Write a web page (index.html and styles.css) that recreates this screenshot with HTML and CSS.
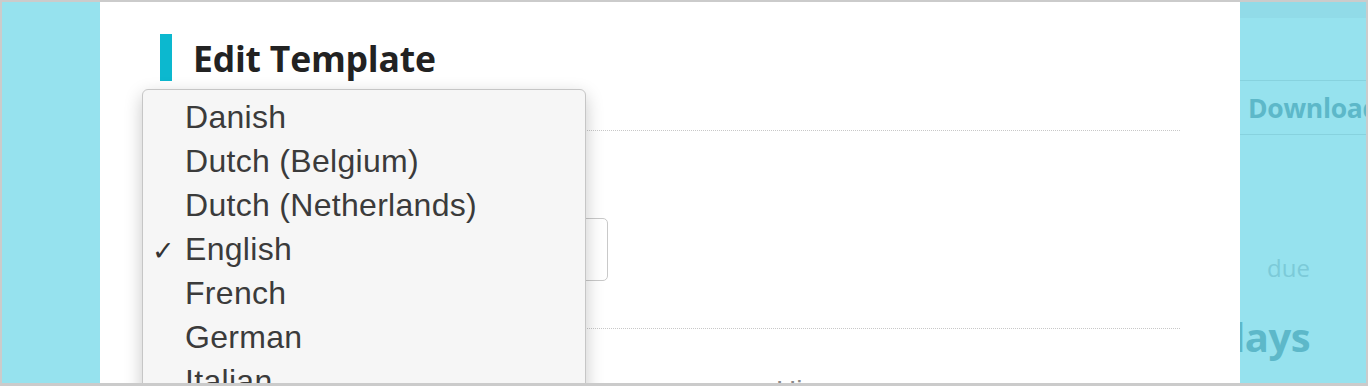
FILE: index.html
```html
<!DOCTYPE html>
<html lang="en">
<head>
    <meta charset="UTF-8">
    <title>Edit Template</title>
    <link rel="stylesheet" href="styles.css">
</head>
<body>
    <div class="frame">
        <div class="gutter"></div>

        <div class="modal">
            <h2 class="modal-title">Edit Template</h2>
            <div class="field">
                <label class="field-label">Language</label>
                <div class="field-input">English</div>
            </div>
            <div class="preview">
                <span class="preview-text">Hi</span>
            </div>

            <ul class="select-menu">
                <li class="select-item">Danish</li>
                <li class="select-item">Dutch (Belgium)</li>
                <li class="select-item">Dutch (Netherlands)</li>
                <li class="select-item checked">English</li>
                <li class="select-item">French</li>
                <li class="select-item">German</li>
                <li class="select-item">Italian</li>
            </ul>
        </div>

        <!-- page behind the overlay -->
        <div class="behind">
            <div class="behind-top"></div>
            <div class="behind-bar">Download</div>
            <div class="behind-due">due</div>
            <div class="behind-days">days</div>
        </div>
    </div>
</body>
</html>
```

FILE: styles.css
```css
body{
    margin: 0;
}
ul, li{
    list-style: none;
    padding: 0;
    margin: 0;
}
.frame{
    width: 1368px;
    height: 386px;
    box-sizing: border-box;
    border: 2px solid #cbcbcb;
    border-bottom-width: 3px;
    background: #96e2ee;
    display: flex;
    overflow: hidden;
    font-family: "Liberation Sans", Arial, sans-serif;
}
.gutter{
    width: 98px;
    flex: none;
}
.modal{
    width: 1140px;
    flex: none;
    background: #fff;
    box-sizing: border-box;
    padding: 32px 60px 0 60px;
    position: relative;
}
.modal-title{
    margin: 0;
    height: 47px;
    border-left: 12px solid #0cb8cf;
    padding-left: 21px;
    font-family: "Open Sans", sans-serif;
    font-weight: 700;
    font-size: 35.5px;
    line-height: 49px;
    color: #222;
    letter-spacing: -0.2px;
}
.field{
    margin-top: 49px;
    border-top: 1px dotted #c8c8c8;
    border-bottom: 1px dotted #c8c8c8;
    height: 199px;
    box-sizing: border-box;
    padding-top: 38px;
}
.field-label{
    display: block;
    font-size: 18px;
    color: #666;
    height: 49px;
}
.field-input{
    width: 448px;
    height: 63px;
    box-sizing: border-box;
    border: 1px solid #c9c9c9;
    border-radius: 5px;
    padding: 0 16px;
    line-height: 61px;
    font-size: 20px;
    color: #333;
}
.preview{
    padding: 46px 0 0 616px;
}
.preview-text{
    font-size: 28px;
    color: #8a8a8a;
}
.select-menu{
    position: absolute;
    left: 42px;
    top: 87px;
    width: 444px;
    height: 330px;
    box-sizing: border-box;
    padding-top: 5px;
    background: #f6f6f6;
    border: 1px solid #c6c6c6;
    border-radius: 6px;
    box-shadow: 0 6px 18px rgba(0, 0, 0, 0.22);
}
.select-item{
    height: 44px;
    line-height: 44px;
    padding-left: 42px;
    font-size: 32px;
    letter-spacing: 0.3px;
    color: #3b3b3b;
    position: relative;
}
.select-item.checked:before{
    content: "\2713";
    position: absolute;
    left: 9px;
    top: 2px;
    font-family: "DejaVu Sans", sans-serif;
    font-weight: 700;
    font-size: 27px;
    color: #333;
}
.behind{
    flex: 1;
    overflow: hidden;
    font-family: "Open Sans", sans-serif;
    font-weight: 700;
    color: #5db8c9;
}
.behind-top{
    height: 16px;
    background: #91dbe8;
    margin-bottom: 62px;
}
.behind-bar{
    height: 53px;
    border-top: 1px solid #87d2de;
    border-bottom: 1px solid #87d2de;
    line-height: 54px;
    padding-left: 8px;
    font-size: 26.5px;
    letter-spacing: -0.3px;
    white-space: nowrap;
}
.behind-due{
    margin-top: 116px;
    padding-left: 27px;
    font-weight: 400;
    font-size: 24px;
    color: #7ccad8;
}
.behind-days{
    margin-top: 30px;
    margin-left: -20px;
    font-size: 40px;
    line-height: 46px;
    letter-spacing: -0.5px;
}
```
